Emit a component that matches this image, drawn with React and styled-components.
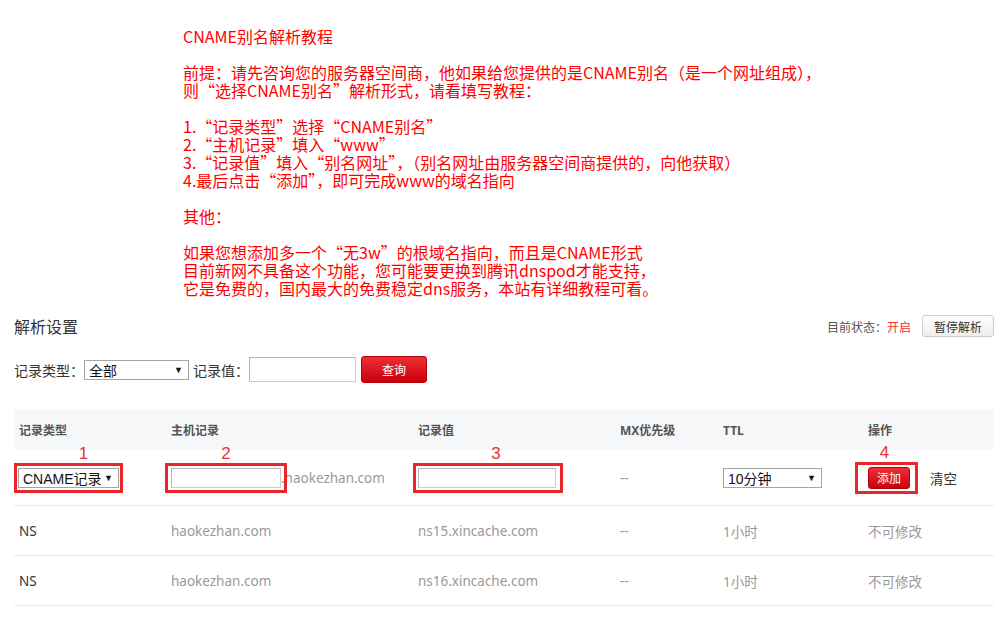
import styled, { createGlobalStyle } from "styled-components";

const GlobalStyle = createGlobalStyle`
  html, body {
    margin: 0;
    padding: 0;
    background: #fff;
  }
  body {
    font-family: "Noto Sans", "Noto Sans CJK SC", sans-serif;
    color: #333;
  }
`;

const Page = styled.div`
  width: 1002px;
  height: 633px;
  overflow: hidden;
  box-sizing: border-box;
  padding: 27px 8px 0 14px;
`;

const Tutorial = styled.div`
  margin-left: 169px;
  color: #ff0000;
  font-family: "Noto Sans CJK SC", sans-serif;
  font-size: 16px;
  line-height: 18px;

  p {
    margin: 0 0 18px;
  }
`;

const SectionHead = styled.div`
  margin-top: 5px;
  height: 22px;
  display: flex;
  align-items: center;
  justify-content: space-between;
`;

const SectionTitle = styled.h3`
  margin: 0;
  font-family: "Noto Sans CJK SC", sans-serif;
  font-size: 16px;
  font-weight: 400;
  color: #333;
`;

const Status = styled.div`
  display: flex;
  align-items: center;
  font-family: "Noto Sans CJK SC", sans-serif;
  font-size: 12px;
  color: #555;

  em {
    font-style: normal;
    color: #e33;
  }
`;

const GreyButton = styled.button`
  margin-left: 11px;
  width: 72px;
  height: 22px;
  padding: 0;
  border: 1px solid #ccc;
  border-radius: 3px;
  background: linear-gradient(#fff, #eee);
  font-family: "Noto Sans CJK SC", sans-serif;
  font-size: 12px;
  color: #333;
`;

const Filter = styled.div`
  margin-top: 19px;
  height: 27px;
  display: flex;
  align-items: center;
`;

const Label = styled.span`
  font-family: "Noto Sans CJK SC", sans-serif;
  font-size: 14px;
  color: #333;
`;

const FakeSelect = styled.div`
  box-sizing: border-box;
  width: ${(p) => p.$w}px;
  height: 20px;
  margin-right: ${(p) => p.$mr || 0}px;
  display: inline-flex;
  align-items: center;
  justify-content: space-between;
  padding: 0 5px 0 4px;
  border: 1px solid #a5a5a5;
  background: #fff;
  font-family: "Liberation Sans", "Noto Sans CJK SC", sans-serif;
  font-size: 14px;
  color: #111;

  &::after {
    content: "▼";
    font-size: 9px;
    color: #111;
  }
`;

const TextInput = styled.input`
  box-sizing: border-box;
  width: ${(p) => p.$w}px;
  height: ${(p) => p.$h}px;
  margin: 0;
  padding: 0 4px;
  border: 1px solid #ccc;
  border-left-color: #b5b5b5;
  border-top-color: #b5b5b5;
  background: #fff;
  outline: none;
`;

const RedButton = styled.button`
  box-sizing: border-box;
  width: ${(p) => p.$w}px;
  height: ${(p) => p.$h}px;
  margin-left: ${(p) => p.$ml || 0}px;
  padding: 0;
  border: 1px solid #b8000a;
  border-radius: 3px;
  background: linear-gradient(#ee3037, #c9000d);
  font-family: "Noto Sans CJK SC", sans-serif;
  font-size: 12px;
  color: #fff;
`;

const Table = styled.div`
  margin-top: 27px;
`;

const Row = styled.div`
  display: grid;
  grid-template-columns: 152px 247px 202px 103px 145px 1fr;
  height: ${(p) => p.$h}px;
  background: ${(p) => (p.$head ? "#f6f7f9" : "#fff")};
  border-bottom: ${(p) => (p.$head ? "none" : "1px solid #e8e8e8")};
`;

const Cell = styled.div`
  display: flex;
  align-items: center;
  padding-left: 5px;
  font-family: "Noto Sans", "Noto Sans CJK SC", sans-serif;
  font-size: ${(p) => (p.$head ? 12 : 13.5)}px;
  font-weight: ${(p) => (p.$head ? 700 : 400)};
  color: ${(p) => (p.$head ? "#555" : p.$dark ? "#333" : "#999")};
`;

const RedBox = styled.div`
  position: relative;
  z-index: 1;
  display: inline-flex;
  align-items: center;
  margin-left: ${(p) => p.$ml}px;
  padding: ${(p) => p.$pad};
  border: 3px solid #e8262c;
`;

const Mark = styled.span`
  position: absolute;
  bottom: calc(100% + 5px);
  left: 50%;
  transform: translateX(calc(-50% + ${(p) => p.$dx || 0}px));
  font-family: "Liberation Sans", sans-serif;
  font-size: 17px;
  line-height: 14px;
  color: #e8343a;
`;

const Suffix = styled.span`
  margin-left: -6px;
  color: #999;
`;

const Plain = styled.span`
  margin-left: 12px;
  color: #333;
`;

const heads = ["记录类型", "主机记录", "记录值", "MX优先级", "TTL", "操作"];

const records = [
  ["NS", "haokezhan.com", "ns15.xincache.com", "--", "1小时", "不可修改"],
  ["NS", "haokezhan.com", "ns16.xincache.com", "--", "1小时", "不可修改"],
];

export default function App() {
  return (
    <Page>
      <GlobalStyle />
      <Tutorial>
        <p>CNAME别名解析教程</p>
        <p>
          前提：请先咨询您的服务器空间商，他如果给您提供的是CNAME别名（是一个网址组成），
          <br />
          则“选择CNAME别名”解析形式，请看填写教程：
        </p>
        <p>
          1.“记录类型”选择“CNAME别名”
          <br />
          2.“主机记录”填入“www”
          <br />
          3.“记录值”填入“别名网址”，（别名网址由服务器空间商提供的，向他获取）
          <br />
          4.最后点击“添加”，即可完成www的域名指向
        </p>
        <p>其他：</p>
        <p>
          如果您想添加多一个“无3w”的根域名指向，而且是CNAME形式
          <br />
          目前新网不具备这个功能，您可能要更换到腾讯dnspod才能支持，
          <br />
          它是免费的，国内最大的免费稳定dns服务，本站有详细教程可看。
        </p>
      </Tutorial>

      <SectionHead>
        <SectionTitle>解析设置</SectionTitle>
        <Status>
          目前状态：<em>开启</em>
          <GreyButton>暂停解析</GreyButton>
        </Status>
      </SectionHead>

      <Filter>
        <Label>记录类型：</Label>
        <FakeSelect $w={105} $mr={4}>
          全部
        </FakeSelect>
        <Label>记录值：</Label>
        <TextInput $w={107} $h={25} />
        <RedButton $w={66} $h={27} $ml={5}>
          查询
        </RedButton>
      </Filter>

      <Table>
        <Row $head $h={40}>
          {heads.map((h) => (
            <Cell $head key={h}>
              {h}
            </Cell>
          ))}
        </Row>

        <Row $h={55}>
          <Cell>
            <RedBox $ml={-5} $pad="2px 1px">
              <Mark $dx={15}>1</Mark>
              <FakeSelect $w={101}>CNAME记录</FakeSelect>
            </RedBox>
          </Cell>
          <Cell>
            <RedBox $ml={-6} $pad="2px 3px">
              <Mark>2</Mark>
              <TextInput $w={110} $h={20} />
            </RedBox>
            <Suffix>.haokezhan.com</Suffix>
          </Cell>
          <Cell>
            <RedBox $ml={-5} $pad="2px 4px 2px 2px">
              <Mark $dx={8}>3</Mark>
              <TextInput $w={138} $h={20} />
            </RedBox>
          </Cell>
          <Cell>--</Cell>
          <Cell>
            <FakeSelect $w={99}>10分钟</FakeSelect>
          </Cell>
          <Cell>
            <RedBox $ml={-13} $pad="2px 5px 2px 10px">
              <Mark $dx={-2}>4</Mark>
              <RedButton $w={42} $h={22}>
                添加
              </RedButton>
            </RedBox>
            <Plain>清空</Plain>
          </Cell>
        </Row>

        {records.map((r, i) => (
          <Row $h={49} key={i}>
            {r.map((v, j) => (
              <Cell $dark={j === 0} key={j}>
                {v}
              </Cell>
            ))}
          </Row>
        ))}
      </Table>
    </Page>
  );
}
